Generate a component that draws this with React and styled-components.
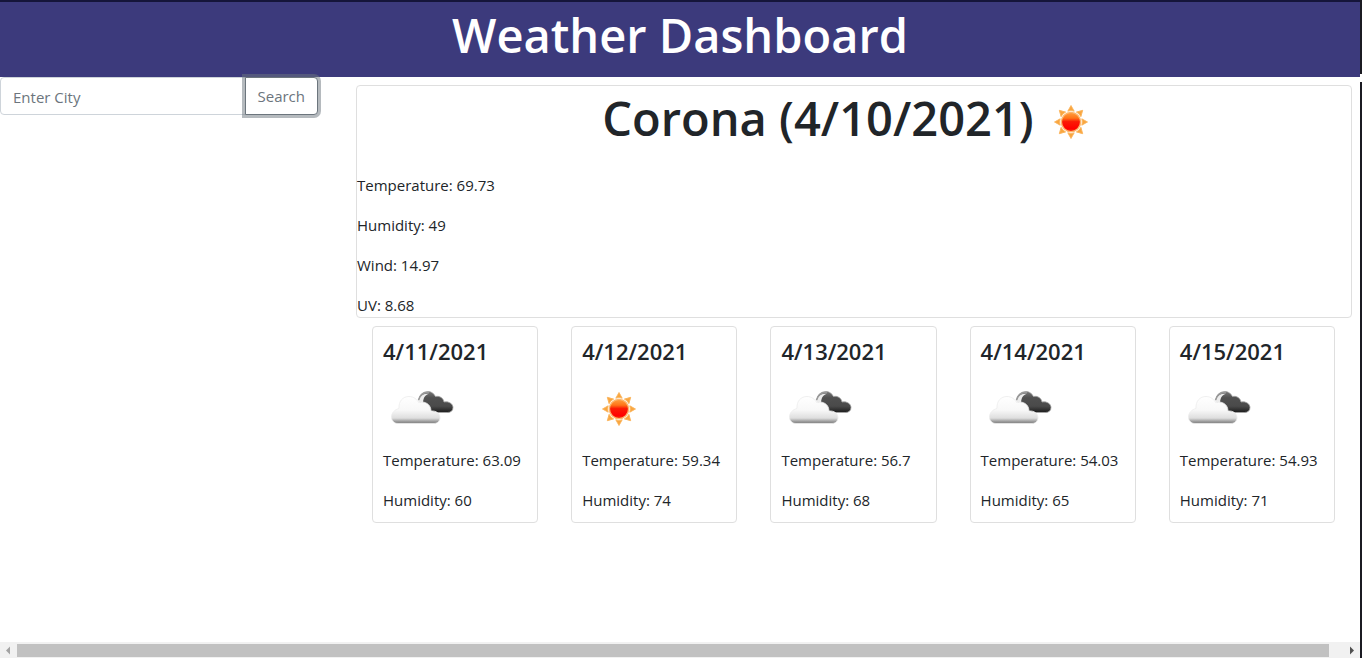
import React, { useId } from "react";
import styled, { createGlobalStyle } from "styled-components";

const GlobalStyle = createGlobalStyle`
  *, *::before, *::after { box-sizing: border-box; }
  body {
    margin: 0;
    background: #fff;
    color: #212529;
    font-family: "Segoe UI", "Open Sans", "Noto Sans", sans-serif;
    font-size: 15px;
    line-height: 24px;
  }
`;

const Screen = styled.div`
  display: flex;
  height: 100vh;
`;

const Page = styled.div`
  flex: 1;
  min-width: 0;
  display: flex;
  flex-direction: column;
`;

const Edge = styled.div`
  flex: 0 0 2px;
  display: flex;
  flex-direction: column;
  gap: 8px;
`;

const EdgePart = styled.div`
  flex: ${(p) => (p.$tall ? "1" : "0 0 74px")};
  background: #1b1b22;
`;

const Header = styled.header`
  background: #3c3a7c;
  border-top: 2px solid #15153a;
  padding: 2px 0 11px;
  text-align: center;
`;

const Title = styled.h1`
  margin: 0;
  color: #fff;
  font-size: 47px;
  font-weight: 600;
  line-height: 62px;
`;

const Content = styled.div`
  flex: 1;
  min-height: 0;
  display: flex;
  align-items: flex-start;
`;

const Sidebar = styled.aside`
  flex: 0 0 25%;
  padding-right: 22px;
`;

const SearchForm = styled.form`
  display: flex;
`;

const CityInput = styled.input`
  flex: 1;
  min-width: 0;
  height: 38px;
  padding: 8px 12px 6px;
  border: 1px solid #ced4da;
  border-radius: 4px 0 0 4px;
  background: #fff;
  color: #495057;
  font: inherit;

  &::placeholder {
    color: #6c757d;
    opacity: 1;
  }
`;

const SearchButton = styled.button`
  position: relative;
  height: 38px;
  margin-left: -1px;
  padding: 0 12px;
  border: 1px solid #6c757d;
  border-radius: 0 4px 4px 0;
  background: #fff;
  color: #6c757d;
  font: inherit;
  box-shadow: 0 0 0 3px rgba(108, 117, 125, 0.5);
`;

const Main = styled.main`
  flex: 1;
  min-width: 0;
  padding: 8px 8px 0 16px;
`;

const Panel = styled.section`
  border: 1px solid #dfdfdf;
  border-radius: 4px;
`;

const Current = styled(Panel)`
  margin-bottom: 8px;
`;

const CityHeading = styled.h2`
  display: flex;
  justify-content: center;
  margin: 0 0 23px;
  font-size: 47px;
  font-weight: 600;
  line-height: 64px;
`;

const Reading = styled.p`
  margin: 0 0 16px;

  &:last-child {
    margin-bottom: 0;
  }
`;

const Forecast = styled.div`
  display: grid;
  grid-template-columns: repeat(5, 1fr);
`;

const Day = styled(Panel)`
  margin: 0 17px 0 16px;
  padding: 10px;
  white-space: nowrap;
`;

const DayHeading = styled.h3`
  margin: 0 0 16px;
  font-size: 22px;
  font-weight: 600;
  line-height: 29px;
`;

const Icon = styled.svg`
  display: block;
  flex: none;
  width: 72px;
  height: 50px;
  margin: ${(p) => (p.$heading ? "9px 0 0" : "0 0 16px")};
`;

const ScrollBar = styled.div`
  flex: 0 0 16px;
  display: flex;
  align-items: center;
  background: #f1f1f1;
`;

const ScrollArrow = styled.svg`
  flex: none;
  width: ${(p) => (p.$end ? 15 : 17)}px;
  height: 16px;
`;

const ScrollThumb = styled.div`
  flex: 1;
  height: 13px;
  margin-right: 16px;
  background: #c1c1c1;
`;

function Sun({ heading }) {
  const id = useId();
  return (
    <Icon viewBox="0 0 72 50" $heading={heading} role="img" aria-label="Clear sky">
      <defs>
        <linearGradient id={id} x1="0" y1="0" x2="0" y2="1">
          <stop offset="0" stopColor="#ffa040" />
          <stop offset="0.3" stopColor="#ff7418" />
          <stop offset="0.48" stopColor="#fb1a05" />
          <stop offset="0.85" stopColor="#ff0000" />
          <stop offset="1" stopColor="#f5400c" />
        </linearGradient>
      </defs>
      <g transform="translate(37 27)">
        {[0, 45, 90, 135, 180, 225, 270, 315].map((angle) => (
          <path
            key={angle}
            d="M-3.2-10.800Q0-12 3.2-10.800L0-16.500Z"
            fill="#f9a63f"
            stroke="#fbb45c"
            strokeWidth="0.9"
            strokeLinejoin="round"
            transform={`rotate(${angle})`}
          />
        ))}
        <circle r="9.6" fill={`url(#${id})`} stroke="#fdb56a" strokeWidth="1.4" />
      </g>
    </Icon>
  );
}

function Clouds() {
  const id = useId();
  return (
    <Icon viewBox="0 0 72 50" role="img" aria-label="Broken clouds">
      <defs>
        <linearGradient id={`${id}f`} x1="0" y1="0" x2="0" y2="1">
          <stop offset="0" stopColor="#ffffff" />
          <stop offset="0.5" stopColor="#f8f8f8" />
          <stop offset="0.8" stopColor="#dedede" />
          <stop offset="0.93" stopColor="#999" />
          <stop offset="1" stopColor="#808080" />
        </linearGradient>
        <linearGradient id={`${id}b`} x1="0" y1="0" x2="0" y2="1">
          <stop offset="0" stopColor="#777" />
          <stop offset="0.3" stopColor="#505050" />
          <stop offset="0.7" stopColor="#4a4a4a" />
          <stop offset="1" stopColor="#1c1c1c" />
        </linearGradient>
      </defs>
      <path
        d="M36 19C36 13 40 9.500 45 9.500C49 9.500 51 12 52.500 14.500C57 13.500 60.500 16.500 61 20C66 19 70 22 70 25.500C70 29 67.500 30.500 64.500 30.500H47Z"
        fill={`url(#${id}b)`}
        stroke="#a8a8a8"
        strokeWidth="0.8"
      />
      <path
        d="M35.500 20C36.500 14 40 11 46 11.800C42 13 40.500 15.500 40 20.500Z"
        fill="#ececec"
      />
      <path d="M35.500 18C37 12.500 40.500 10 46 10.500" fill="none" stroke="#999" strokeWidth="1.6" />
      <path
        d="M15 41.500C11 41.500 8.500 38.500 8.500 35C8.500 30.500 12 27.500 16 26.500C15.500 19 20 14.500 26 14.500C31 14.500 34 17.500 35.500 20.500C42 18.500 48 22.500 48 29C53 28.500 57 31.500 57 35.500C57 39 54.500 41.500 51 41.500Z"
        fill={`url(#${id}f)`}
        stroke="#ececec"
        strokeWidth="0.8"
      />
    </Icon>
  );
}

const current = [
  ["Temperature", "69.73"],
  ["Humidity", "49"],
  ["Wind", "14.97"],
  ["UV", "8.68"],
];

const days = [
  { date: "4/11/2021", temperature: "63.09", humidity: 60 },
  { date: "4/12/2021", temperature: "59.34", humidity: 74, clear: true },
  { date: "4/13/2021", temperature: "56.7", humidity: 68 },
  { date: "4/14/2021", temperature: "54.03", humidity: 65 },
  { date: "4/15/2021", temperature: "54.93", humidity: 71 },
];

export default function App() {
  return (
    <Screen>
      <GlobalStyle />
      <Page>
        <Header>
          <Title>Weather Dashboard</Title>
        </Header>
        <Content>
          <Sidebar>
            <SearchForm onSubmit={(e) => e.preventDefault()}>
              <CityInput type="text" placeholder="Enter City" aria-label="City" />
              <SearchButton type="submit">Search</SearchButton>
            </SearchForm>
          </Sidebar>
          <Main>
            <Current>
              <CityHeading>
                Corona (4/10/2021)
                <Sun heading />
              </CityHeading>
              {current.map(([label, value]) => (
                <Reading key={label}>{`${label}: ${value}`}</Reading>
              ))}
            </Current>
            <Forecast>
              {days.map((day) => (
                <Day key={day.date}>
                  <DayHeading>{day.date}</DayHeading>
                  {day.clear ? <Sun /> : <Clouds />}
                  <Reading>{`Temperature: ${day.temperature}`}</Reading>
                  <Reading>{`Humidity: ${day.humidity}`}</Reading>
                </Day>
              ))}
            </Forecast>
          </Main>
        </Content>
        <ScrollBar aria-hidden="true">
          <ScrollArrow viewBox="0 0 17 16">
            <path d="M10 4.500V12.500L6 8.500Z" fill="#a3a3a3" />
          </ScrollArrow>
          <ScrollThumb />
          <ScrollArrow $end viewBox="0 0 15 16">
            <path d="M5 4.500V12.500L9 8.500Z" fill="#505050" />
          </ScrollArrow>
        </ScrollBar>
      </Page>
      <Edge>
        <EdgePart />
        <EdgePart $tall />
      </Edge>
    </Screen>
  );
}
